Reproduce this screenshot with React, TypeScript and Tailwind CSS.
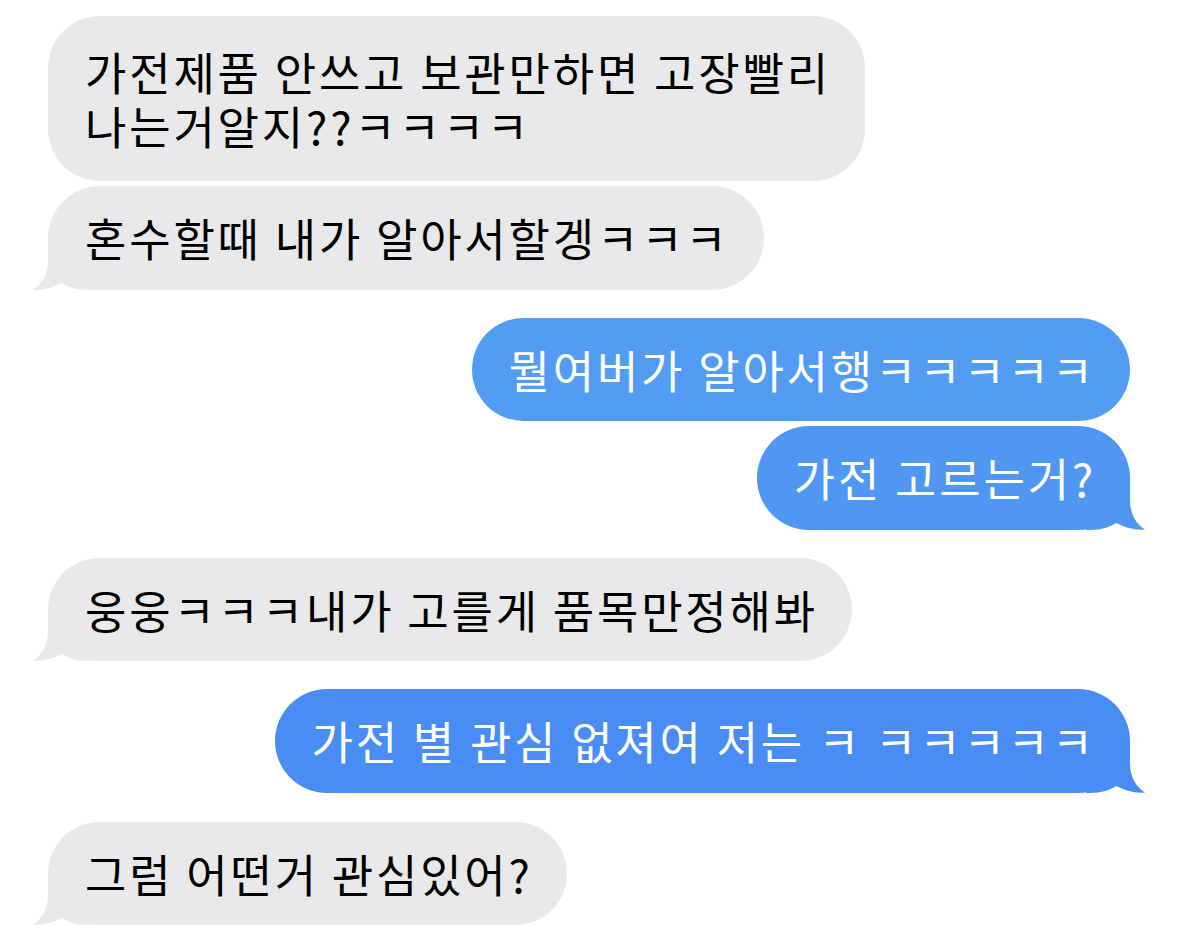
import React from 'react';

type Side = 'left' | 'right';

interface Msg {
  side: Side;
  lines: string[];
  tail?: boolean;
  bg: string;
  fill: string;
  gap: string;
  pad?: string;
}

const messages: Msg[] = [
  {
    side: 'left',
    lines: ['가전제품 안쓰고 보관만하면 고장빨리', '나는거알지??ㅋㅋㅋㅋ'],
    bg: 'bg-[#e9e9eb]',
    fill: '#e9e9eb',
    gap: 'mt-0',
    pad: 'py-[29px]',
  },
  { side: 'left', lines: ['혼수할때 내가 알아서할겡ㅋㅋㅋ'], tail: true, bg: 'bg-[#e9e9eb]', fill: '#e9e9eb', gap: 'mt-[5px]' },
  { side: 'right', lines: ['뭘여버가 알아서행ㅋㅋㅋㅋㅋ'], bg: 'bg-[#539cf4]', fill: '#539cf4', gap: 'mt-[28px]' },
  { side: 'right', lines: ['가전 고르는거?'], tail: true, bg: 'bg-[#5097f4]', fill: '#5097f4', gap: 'mt-[5px]' },
  { side: 'left', lines: ['웅웅ㅋㅋㅋ내가 고를게 품목만정해봐'], tail: true, bg: 'bg-[#e9e9eb]', fill: '#e9e9eb', gap: 'mt-[28px]' },
  { side: 'right', lines: ['가전 별 관심 없져여 저는 ㅋ ㅋㅋㅋㅋㅋ'], tail: true, bg: 'bg-[#498df4]', fill: '#498df4', gap: 'mt-[28px]' },
  { side: 'left', lines: ['그럼 어떤거 관심있어?'], tail: true, bg: 'bg-[#e9e9eb]', fill: '#e9e9eb', gap: 'mt-[29px]' },
];

function Tail({ side, fill }: { side: Side; fill: string }) {
  const d =
    'M16 0 L16 22 C16 36 10 46 1 51.5 C10 52.5 20 50 30 45 C36 49 44 52 56 52 L60 52 L60 0 Z';
  return (
    <svg
      width="60"
      height="52"
      viewBox="0 0 60 52"
      className={
        side === 'left'
          ? 'absolute bottom-0 left-[-16px]'
          : 'absolute bottom-0 right-[-16px] -scale-x-100'
      }
    >
      <path d={d} fill={fill} />
    </svg>
  );
}

function Bubble({ msg }: { msg: Msg }) {
  const isLeft = msg.side === 'left';
  return (
    <div className={`flex ${isLeft ? 'justify-start' : 'justify-end'} ${msg.gap}`}>
      <div
        className={`relative rounded-[52px] pl-[37px] pr-[34px] ${msg.pad ?? 'py-[25px]'} ${msg.bg} ${
          isLeft ? 'text-black' : 'text-white'
        }`}
      >
        {msg.tail && <Tail side={msg.side} fill={msg.fill} />}
        <p className="relative whitespace-nowrap text-[45px] leading-[53.5px] tracking-[2.8px]">
          {msg.lines.map((line, i) => (
            <React.Fragment key={i}>
              {i > 0 && <br />}
              {line}
            </React.Fragment>
          ))}
        </p>
      </div>
    </div>
  );
}

export default function App() {
  return (
    <div
      className="min-h-[943px] w-[1179px] bg-white pl-[48px] pr-[49px] pt-[16px]"
      style={{ fontFamily: '"Noto Sans CJK KR", "Noto Sans", sans-serif' }}
    >
      {messages.map((m, i) => (
        <Bubble key={i} msg={m} />
      ))}
    </div>
  );
}
